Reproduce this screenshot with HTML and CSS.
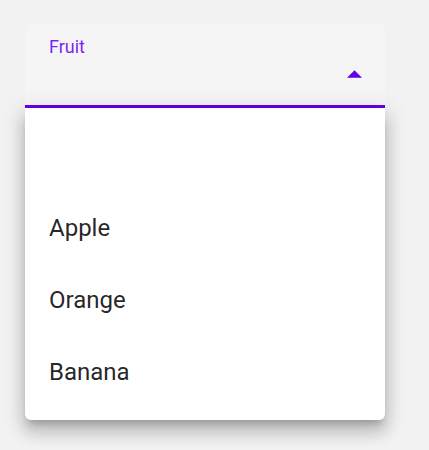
FILE: index.html
```html
<!DOCTYPE html>
<html>
<head>
<meta charset="utf-8">
<link rel="stylesheet" href="styles.css">
</head>
<body>
<div class="page">
  <div class="select">
    <div class="anchor">
      <span class="label">Fruit</span>
      <svg class="arrow" width="15" height="8" viewBox="0 0 15 7.5"><polygon points="0,7.5 7.5,0 15,7.5" fill="#6200ee"/></svg>
    </div>
    <ul class="menu">
      <li class="item"></li>
      <li class="item">Apple</li>
      <li class="item">Orange</li>
      <li class="item">Banana</li>
    </ul>
  </div>
</div>
</body>
</html>
```
FILE: styles.css
```css
html, body {
  margin: 0;
  padding: 0;
  background: #f2f2f2;
  font-family: Roboto, "Liberation Sans", sans-serif;
}
.page {
  padding: 24px 25px;
  min-height: 450px;
  box-sizing: border-box;
}
.select {
  width: 360px;
}
.anchor {
  box-sizing: border-box;
  height: 84px;
  background: #f5f5f5;
  border-radius: 6px 6px 0 0;
  border-bottom: 3px solid #6200ee;
  padding: 14px 23px 0 24px;
  display: grid;
  grid-template-rows: 18px auto;
  row-gap: 14px;
}
.label {
  font-size: 18px;
  line-height: 18px;
  color: rgba(98, 0, 238, 0.87);
}
.arrow {
  display: block;
  justify-self: end;
}
.menu {
  position: relative;
  z-index: 2;
  width: 360px;
  margin: 0;
  padding: 12px 0;
  list-style: none;
  background: #fff;
  border-radius: 0 0 6px 6px;
  box-shadow: 0 7.5px 7.5px -4.5px rgba(0,0,0,.2), 0 12px 15px 1.5px rgba(0,0,0,.14), 0 4.5px 21px 3px rgba(0,0,0,.12);
}
.item {
  height: 72px;
  display: flex;
  align-items: center;
  padding: 0 24px;
  font-size: 24px;
  color: rgba(0, 0, 0, 0.87);
}
```
